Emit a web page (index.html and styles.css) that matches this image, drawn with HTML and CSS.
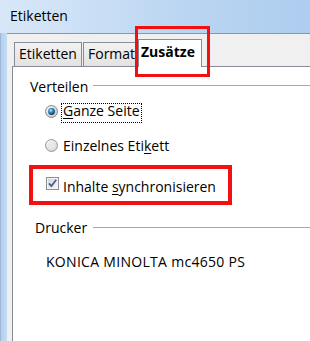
FILE: index.html
```html
<!DOCTYPE html>
<html lang="de">
<head>
<meta charset="utf-8">
<title>Etiketten</title>
<link rel="stylesheet" href="styles.css">
</head>
<body>
<div class="window">
  <div class="titlebar">Etiketten</div>
  <div class="frame">
    <div class="side"></div>
    <div class="client">
      <div class="tabs">
        <div class="tab tab-1">Etiketten</div>
        <div class="tab tab-2">Format</div>
        <div class="tab tab-active">Zusätze</div>
      </div>
      <div class="panel">
        <div class="group-head head-verteilen">
          <span class="group-label">Verteilen</span>
          <span class="group-line"></span>
        </div>
        <div class="option option-first">
          <svg class="radio" width="13" height="13" viewBox="0 0 13 13">
            <defs>
              <radialGradient id="rbg" cx="0.35" cy="0.3" r="0.75">
                <stop offset="0" stop-color="#f6f6f6"/>
                <stop offset="1" stop-color="#c9c9c9"/>
              </radialGradient>
              <radialGradient id="dot" cx="0.4" cy="0.35" r="0.65">
                <stop offset="0" stop-color="#bdefff"/>
                <stop offset="0.45" stop-color="#2e8fcb"/>
                <stop offset="1" stop-color="#0a3556"/>
              </radialGradient>
            </defs>
            <circle cx="6.5" cy="6.5" r="6" fill="url(#rbg)" stroke="#8b8b8b"/>
            <circle cx="6.5" cy="6.5" r="3.4" fill="url(#dot)"/>
          </svg>
          <span class="label focus"><u>G</u>anze Seite</span>
        </div>
        <div class="option option-second">
          <svg class="radio" width="13" height="13" viewBox="0 0 13 13">
            <defs>
              <radialGradient id="rbg2" cx="0.35" cy="0.3" r="0.75">
                <stop offset="0" stop-color="#f8f8f8"/>
                <stop offset="1" stop-color="#d4d4d4"/>
              </radialGradient>
            </defs>
            <circle cx="6.5" cy="6.5" r="6" fill="url(#rbg2)" stroke="#9a9a9a"/>
            <circle cx="6.5" cy="6.5" r="3.6" fill="#e8e8e8"/>
          </svg>
          <span class="label">Einzelnes Eti<u>k</u>ett</span>
        </div>
        <div class="option option-check">
          <svg class="check" width="13" height="13" viewBox="0 0 13 13">
            <defs>
              <linearGradient id="cbg" x1="0" y1="0" x2="1" y2="1">
                <stop offset="0" stop-color="#d6d6d6"/>
                <stop offset="1" stop-color="#f7f7f7"/>
              </linearGradient>
            </defs>
            <rect x="0.5" y="0.5" width="12" height="12" fill="#f4f4f4" stroke="#8e8f8f"/>
            <rect x="2" y="2" width="9" height="9" fill="url(#cbg)"/>
            <path d="M3 6.3 L5.4 9 L10.2 2.8" fill="none" stroke="#4a5e9e" stroke-width="1.8"/>
          </svg>
          <span class="label">Inhalte <u>s</u>ynchronisieren</span>
        </div>
        <div class="group-head head-drucker">
          <span class="group-label">Drucker</span>
          <span class="group-line"></span>
        </div>
        <div class="printer">KONICA MINOLTA mc4650 PS</div>
      </div>
    </div>
  </div>
  <div class="mark mark-tab"></div>
  <div class="mark mark-sync"></div>
</div>
</body>
</html>
```

FILE: styles.css
```css
* { box-sizing: border-box; }
html, body { margin: 0; padding: 0; }
body {
  width: 310px;
  height: 341px;
  overflow: hidden;
  font-family: "Open Sans", "Noto Sans", sans-serif;
  font-size: 14px;
  color: #000;
  background: #f0f0f0;
}
.window {
  position: relative;
  width: 310px;
  height: 341px;
  display: flex;
  flex-direction: column;
  background: linear-gradient(90deg, #c4daf2 0%, #bcd5f0 40%, #b2cfee 100%);
}
.titlebar {
  height: 33px;
  padding: 6px 0 0 10px;
  line-height: 20px;
  background: linear-gradient(90deg, #d8e7f7 0%, #cde1f6 25%, #bad5f1 60%, #aecdef 100%);
}
.frame {
  flex: 1;
  display: flex;
  min-height: 0;
}
.side {
  width: 8px;
  border-left: 1px solid #9db8d8;
  background: linear-gradient(90deg, #b4cfee, #c6dbf2);
  border-right: 1px solid #8a97a8;
}
.client {
  flex: 1;
  display: flex;
  flex-direction: column;
  background: #f0f0f0;
  border-top: 1px solid #8a97a8;
  padding-left: 5px;
  margin-left: -1px;
}
.tabs {
  display: flex;
  align-items: flex-end;
  margin-top: 5px;
  padding-left: 2px;
  height: 27px;
}
.tab {
  height: 24px;
  border: 1px solid #898c95;
  border-bottom: none;
  background: linear-gradient(#f2f2f2, #e2e2e2);
  line-height: 20px;
  padding: 1px 0 0 4px;
  white-space: nowrap;
}
.tab-1 { width: 68px; margin-right: 1px; }
.tab-2 { width: 55px; }
.tab-active {
  position: relative;
  z-index: 1;
  width: 64px;
  height: 28px;
  margin-bottom: -1px;
  background: #fff;
  font-weight: 700;
  padding: 2px 0 0 2px;
}
.panel {
  flex: 1;
  background: #fff;
  border-top: 1px solid #898c95;
  border-left: 1px solid #898c95;
}
.group-head {
  display: grid;
  grid-template-columns: 80px 1fr;
  height: 20px;
  line-height: 20px;
}
.head-verteilen { margin-top: 10px; padding-left: 17px; grid-template-columns: 63px 1fr; }
.head-drucker { margin-top: 19px; }
.head-drucker .group-label { padding-left: 22px; }
.group-line {
  height: 1px;
  margin-top: 8px;
  background: #a8a8a8;
}
.head-drucker .group-line { margin-top: 9px; }
.option {
  display: flex;
  align-items: flex-start;
  padding-left: 32px;
  height: 20px;
}
.option-first { margin-top: 6px; }
.option-second { margin-top: 15px; }
.option-check { margin-top: 21px; }
.radio { margin-top: 2px; margin-right: 3px; flex: none; }
.option-second .radio { margin-top: 1px; }
.check { margin-top: -2px; margin-left: 1px; margin-right: 2px; flex: none; }
.label {
  border: 1px solid transparent;
  line-height: 14px;
  padding: 0 1px 4px;
  white-space: nowrap;
}
.label.focus { border: 1px dotted #000; }
u { text-decoration: underline; text-underline-offset: 2px; }
.printer {
  margin-top: 14px;
  padding-left: 33px;
  line-height: 20px;
  letter-spacing: 0.3px;
}
.mark {
  position: absolute;
  border: 3px solid #f21010;
  z-index: 5;
}
.mark-tab { left: 135px; top: 26px; width: 75px; height: 51px; }
.mark-sync { left: 29px; top: 165px; width: 203px; height: 40px; border-width: 4px; }
```
